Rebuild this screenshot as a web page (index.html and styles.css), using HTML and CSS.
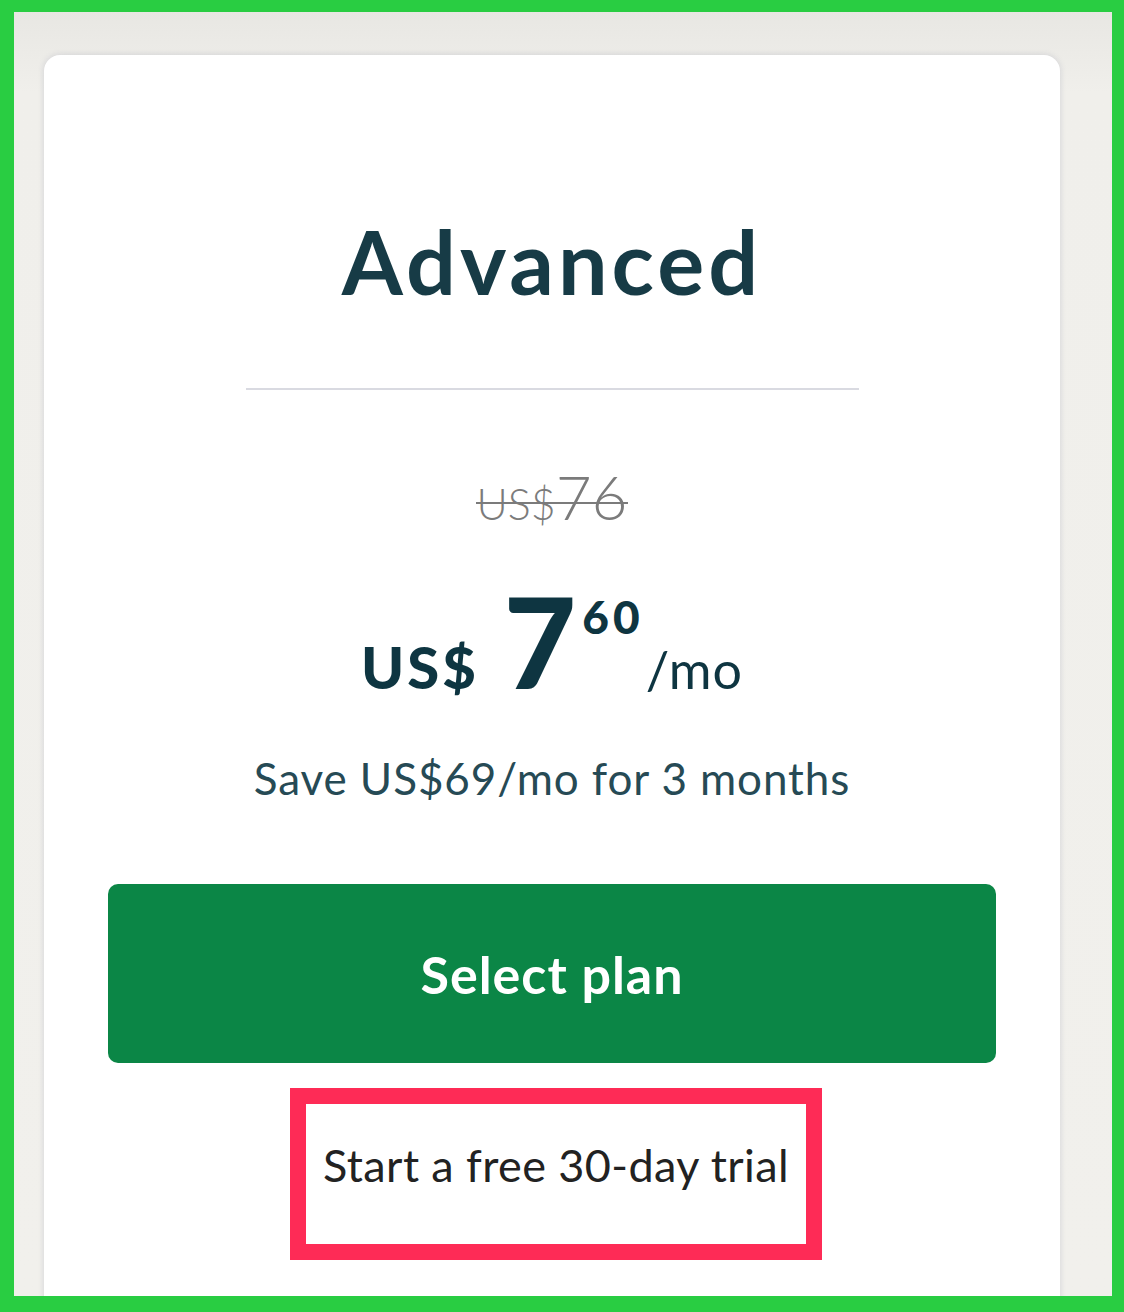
FILE: index.html
```html
<!DOCTYPE html>
<html lang="en">
<head>
    <meta charset="UTF-8">
    <meta name="viewport" content="width=device-width, initial-scale=1.0">
    <title>Advanced plan</title>
    <link rel="stylesheet" href="styles.css">
</head>
<body>

<div class="frame">
    <div class="plan-card">
        <h1 class="plan-name">Advanced</h1>
        <hr class="plan-divider">

        <div class="old-price"><span class="old-cur">US$</span>76</div>

        <div class="price">
            <span class="price-cur">US$</span>
            <span class="price-int">7</span>
            <span class="price-dec">60</span>
            <span class="price-per">/mo</span>
        </div>

        <p class="saving">Save US$69/mo for 3 months</p>

        <button type="button" class="select-btn">Select plan</button>

        <a href="#" class="trial-link">Start a free 30-day trial</a>
    </div>
</div>

</body>
</html>
```

FILE: styles.css
```css
/* Page frame */
body {
    margin: 0;
    background-color: #29cd42;
    font-family: Lato, "Open Sans", sans-serif;
}
.frame {
    margin: 12px 12px 16px 14px;
    height: 1284px;
    background: linear-gradient(#e8e7e3, #f0efeb 80px, #f1f0ec);
    padding: 43px 0 0 30px;
    box-sizing: border-box;
    overflow: hidden;
}

/* Plan card */
.plan-card {
    width: 1016px;
    height: 1300px;
    background-color: #ffffff;
    border-radius: 16px 16px 0 0;
    box-shadow: 0 0 6px rgba(70, 80, 120, 0.18);
    display: flex;
    flex-direction: column;
    align-items: center;
    color: #123845;
}
.plan-name {
    margin: 162px 0 0;
    font-size: 88px;
    line-height: 1;
    font-weight: 700;
    color: #173b46;
    letter-spacing: 4px;
}
.plan-divider {
    width: 613px;
    height: 2px;
    margin: 83px 0 0;
    border: none;
    background-color: #d9dae1;
}

/* Prices */
.old-price {
    margin-top: 75px;
    font-size: 62px;
    line-height: 1;
    font-weight: 300;
    color: #7b7b7b;
    /* one strike line across both sizes */
    background: linear-gradient(transparent 37px, #7b7b7b 37px, #7b7b7b 39px, transparent 39px);
}
.old-cur {
    font-size: 43px;
}
.price {
    display: flex;
    align-items: baseline;
    margin-top: 52px;
    line-height: 1;
    font-weight: 900;
    color: #0e3541;
}
.price-cur {
    font-size: 58px;
    letter-spacing: 3px;
    margin-right: 25px;
}
.price-int {
    font-size: 125px;
}
.price-dec {
    align-self: flex-start;
    font-size: 46px;
    letter-spacing: 4px;
    margin: 15px 0 0 6px;
}
.price-per {
    font-size: 52px;
    font-weight: 400;
    margin-left: 2px;
    letter-spacing: 1px;
}
.saving {
    margin: 52px 0 0;
    font-size: 44px;
    line-height: 1;
    color: #264a55;
    letter-spacing: 0.9px;
}

/* Actions */
.select-btn {
    width: 888px;
    height: 179px;
    margin-top: 84px;
    border: none;
    border-radius: 10px;
    background-color: #0b8646;
    color: #ffffff;
    font-family: inherit;
    font-size: 52px;
    font-weight: 700;
    letter-spacing: 1px;
    cursor: pointer;
}
.trial-link {
    margin: 25px 0 0 8px;
    width: 500px;
    height: 122px;
    padding-bottom: 18px;
    border: 16px solid #fe2b56;
    display: flex;
    align-items: center;
    justify-content: center;
    font-size: 45px;
    letter-spacing: 0.4px;
    color: #222222;
    text-decoration: none;
    box-sizing: content-box;
}
```
